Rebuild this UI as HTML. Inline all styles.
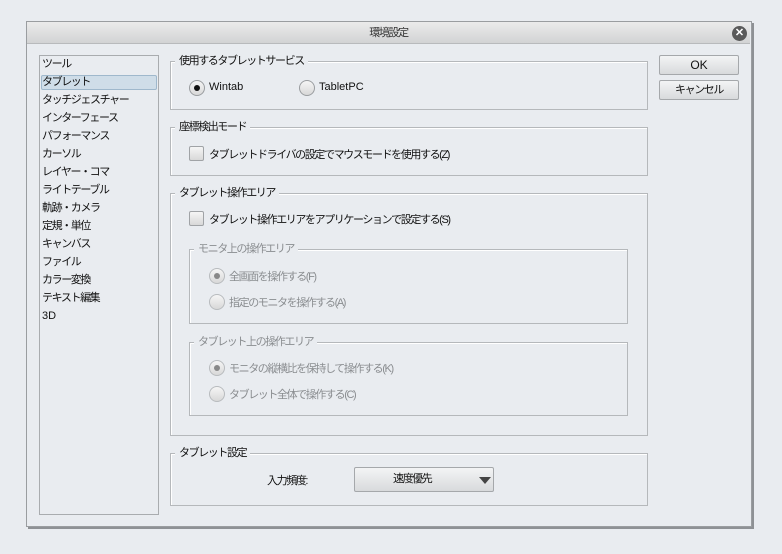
<!DOCTYPE html>
<html><head><meta charset="utf-8"><style>
*{margin:0;padding:0;box-sizing:border-box}
body{width:782px;height:554px;background:#e9ecf0;font-family:"Liberation Sans","Noto Sans CJK JP",sans-serif;font-size:11px;letter-spacing:-1.4px;color:#111;position:relative;overflow:hidden}
.a{position:absolute;white-space:nowrap}
.L{letter-spacing:0;font-size:12px}
.dlg{left:26px;top:21px;width:726px;height:506px;border:1px solid #9a9da0;background:#e9ecf0;box-shadow:2px 2px 0 #8e9195}
.title{left:27px;top:22px;width:723px;height:22px;background:linear-gradient(#ebebeb,#d2d3d4);border-bottom:1px solid #b8babc;text-align:center;line-height:22px;color:#333}
.list{left:39px;top:55px;width:120px;height:460px;border:1px solid #a9acaf;background:#e9ecf0}
.li{position:absolute;left:3px;height:16px;line-height:16px;white-space:nowrap}
.sel{left:41px;top:75px;width:116px;height:15px;background:#cfdde8;border:1px solid #9fb8cc;border-radius:2px}
.grp{border:1px solid #b5b8bb;box-shadow:1px 1px 0 #fff inset}
.lg{position:absolute;background:#e9ecf0;padding:0 4px;line-height:14px;white-space:nowrap}
.btn{left:659px;width:80px;height:20px;border:1px solid #a5a8ab;border-radius:2px;background:linear-gradient(#f3f4f5,#d8dadc);text-align:center;line-height:18px}
.rad{width:16px;height:16px;border-radius:50%;border:1px solid #9a9da0;background:linear-gradient(#f5f5f5,#d8d8d8)}
.rad.on::after{content:"";position:absolute;left:4px;top:4px;width:6px;height:6px;border-radius:50%;background:#111}
.rad.dis{border-color:#b8bbbe}
.rad.dis.on::after{background:#888}
.chk{width:15px;height:15px;border:1px solid #a0a3a6;border-radius:2px;background:linear-gradient(#f5f5f5,#d8d8d8)}
.dis{color:#8a8d90}
</style></head><body>
<div class="a dlg"></div>
<div class="a title">環境設定</div>
<div class="a L" style="left:732px;top:26px;width:15px;height:15px;border-radius:50%;background:#5a5a5a;color:#fff;font-size:11px;font-weight:bold;text-align:center;line-height:15px">✕</div>

<div class="a list"></div>
<div class="a sel"></div>
<div class="a" style="left:39px;top:56px;width:118px">
<div class="li" style="top:0">ツール</div>
<div class="li" style="top:18px">タブレット</div>
<div class="li" style="top:36px">タッチジェスチャー</div>
<div class="li" style="top:54px">インターフェース</div>
<div class="li" style="top:72px">パフォーマンス</div>
<div class="li" style="top:90px">カーソル</div>
<div class="li" style="top:108px">レイヤー・コマ</div>
<div class="li" style="top:126px">ライトテーブル</div>
<div class="li" style="top:144px">軌跡・カメラ</div>
<div class="li" style="top:162px">定規・単位</div>
<div class="li" style="top:180px">キャンバス</div>
<div class="li" style="top:198px">ファイル</div>
<div class="li" style="top:216px">カラー変換</div>
<div class="li" style="top:234px">テキスト編集</div>
<div class="li L" style="top:252px;font-size:11px">3D</div>
</div>

<div class="a btn L" style="top:55px">OK</div>
<div class="a btn" style="top:80px">キャンセル</div>

<div class="a grp" style="left:170px;top:61px;width:478px;height:49px"></div>
<div class="lg" style="left:175px;top:54px">使用するタブレットサービス</div>
<div class="a rad on" style="left:189px;top:80px"></div>
<div class="a L" style="left:209px;top:81px;font-size:11px">Wintab</div>
<div class="a rad" style="left:299px;top:80px"></div>
<div class="a L" style="left:319px;top:81px;font-size:11px">TabletPC</div>

<div class="a grp" style="left:170px;top:127px;width:478px;height:49px"></div>
<div class="lg" style="left:175px;top:120px">座標検出モード</div>
<div class="a chk" style="left:189px;top:146px"></div>
<div class="a" style="left:209px;top:146px">タブレットドライバの設定でマウスモードを使用する(Z)</div>

<div class="a grp" style="left:170px;top:193px;width:478px;height:243px"></div>
<div class="lg" style="left:175px;top:186px">タブレット操作エリア</div>
<div class="a chk" style="left:189px;top:211px"></div>
<div class="a" style="left:209px;top:211px">タブレット操作エリアをアプリケーションで設定する(S)</div>

<div class="a grp" style="left:189px;top:249px;width:439px;height:75px"></div>
<div class="lg dis" style="left:194px;top:242px">モニタ上の操作エリア</div>
<div class="a rad dis on" style="left:209px;top:268px"></div>
<div class="a dis" style="left:229px;top:268px">全画面を操作する(F)</div>
<div class="a rad dis" style="left:209px;top:294px"></div>
<div class="a dis" style="left:229px;top:294px">指定のモニタを操作する(A)</div>

<div class="a grp" style="left:189px;top:342px;width:439px;height:74px"></div>
<div class="lg dis" style="left:194px;top:335px">タブレット上の操作エリア</div>
<div class="a rad dis on" style="left:209px;top:360px"></div>
<div class="a dis" style="left:229px;top:360px">モニタの縦横比を保持して操作する(K)</div>
<div class="a rad dis" style="left:209px;top:386px"></div>
<div class="a dis" style="left:229px;top:386px">タブレット全体で操作する(C)</div>

<div class="a grp" style="left:170px;top:453px;width:478px;height:53px"></div>
<div class="lg" style="left:175px;top:446px">タブレット設定</div>
<div class="a" style="left:267px;top:472px">入力頻度:</div>
<div class="a" style="left:354px;top:467px;width:140px;height:25px;border:1px solid #a5a8ab;border-radius:2px;background:linear-gradient(#f3f4f5,#d8dadc);line-height:23px;padding-left:38px">速度優先</div>
<div class="a" style="left:479px;top:477px;width:0;height:0;border-left:6px solid transparent;border-right:6px solid transparent;border-top:7px solid #444"></div>
</body></html>
